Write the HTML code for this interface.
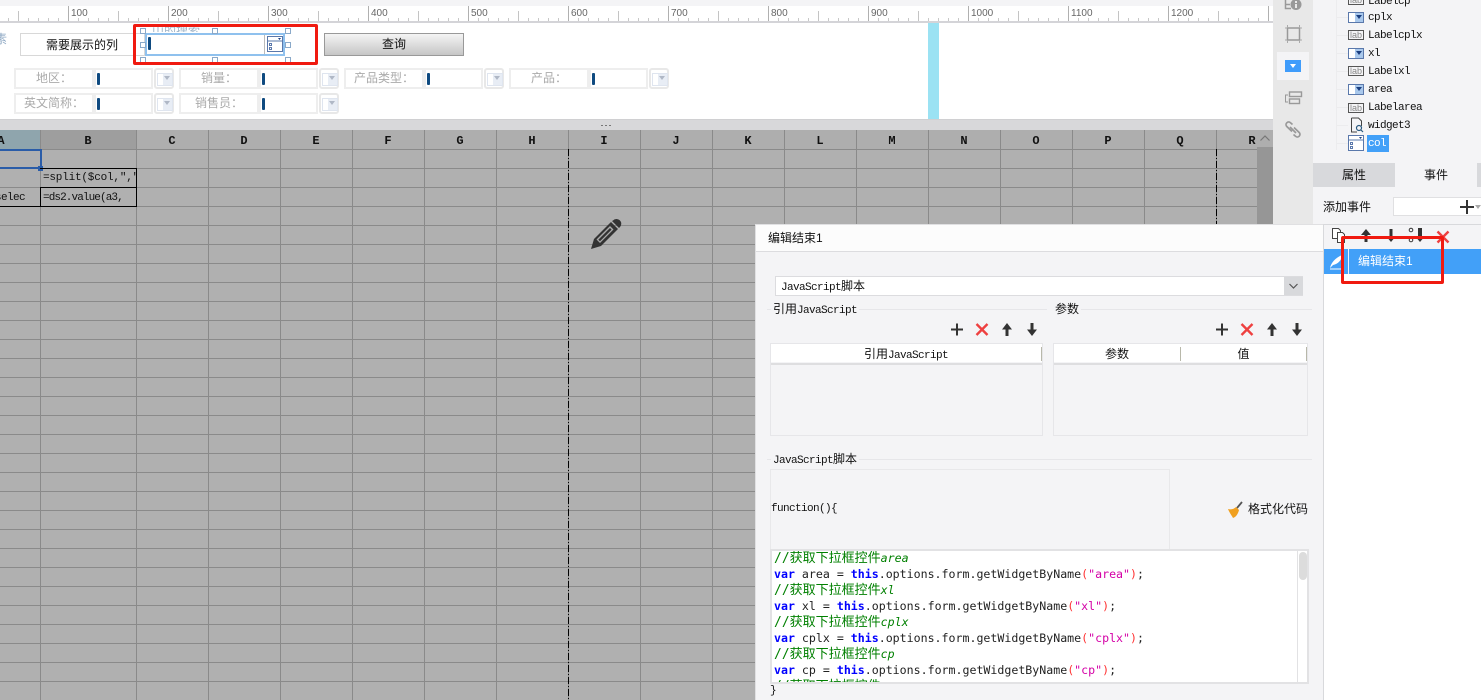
<!DOCTYPE html>
<html lang="zh"><head><meta charset="utf-8"><title>编辑结束1</title>
<style>
html,body{margin:0;padding:0;width:1481px;height:700px;overflow:hidden;background:#f4f4f6}
body{position:relative;font:12px "Liberation Sans","Noto Sans CJK SC",sans-serif;color:#111}
div,span,svg{position:absolute;box-sizing:border-box}
b.m{position:static;font:11px "Liberation Mono",monospace;letter-spacing:-.6px}
.t{white-space:nowrap;line-height:16px}
.r{font:10px/12px "Liberation Sans",sans-serif;color:#666;top:8px}
.c{top:131px;width:72px;text-align:center;font:bold 12px/20px "Liberation Mono",monospace;color:#111}
.lb{border:2px solid #eee;background:#fff;color:#aaa;text-align:center;line-height:17px;height:21px;width:80px}
.ip{border:2px solid #eee;background:#fff;height:21px;width:59px}
.ip:before{content:"";position:absolute;left:1px;top:3px;width:3px;height:12px;background:#0f4a80;border-radius:1px}
.dd{border:2px solid #e8e8e8;border-radius:3px;background:#fff;height:21px;width:20px}
.dd:before{content:"";position:absolute;left:1px;top:3px;width:14px;height:11px;border:1px solid #dfe5ef;background:linear-gradient(90deg,#fff 0 5px,#e8edf5 5px)}
.dd:after{content:"";position:absolute;left:8px;top:6px;border:3px solid transparent;border-top:4px solid #b0b8c6}
.h{width:6px;height:6px;background:#fff;border:1px solid #8aa9c9}
.tl{left:1368px;font:11px/14px "Liberation Mono",monospace;letter-spacing:-.6px;color:#111;white-space:nowrap}
.ic{left:1348px;width:16px;height:11px;border:1px solid #5a78ab;background:#fff}
.ic:before{content:"";position:absolute;left:6px;top:0;width:8px;height:9px;background:#a9c8ec}
.ic:after{content:"";position:absolute;left:7px;top:2px;border:3px solid transparent;border-top:4px solid #1b3f80}
.lab{left:1348px;width:16px;height:10px;border:1px solid #555;background:#f4f4f6;font:9px/8px "Liberation Sans",sans-serif;color:#888;text-align:center}
.tree{left:1336px;width:12px;height:1px;background:#ececee}
.code{left:2px;width:522px;font:11.6px/16px "DejaVu Sans Mono","Noto Sans CJK SC",monospace;white-space:pre;color:#222}
.k{position:static;color:#00f;font-weight:bold}.s{position:static;color:#d400a6}.p{position:static;color:#f33}
.g{color:#008000;font-size:13px}.g em{position:static;font-size:11.6px}
.fl{height:1px;background:#e6e6e9}
.lg{background:#f4f4f6;padding:0 2px;white-space:nowrap;line-height:16px}
.cell{font:11px/16px "Liberation Mono",monospace;white-space:nowrap}
</style></head><body>

<!-- ruler -->
<div style="left:0;top:6px;width:1273px;height:17px;background:#fff;border-bottom:2px solid #d4d4d8"></div>
<div style="left:-2px;top:18px;width:1275px;height:3px;background:repeating-linear-gradient(90deg,#c8c8c8 0 1px,transparent 1px 10px)"></div>
<div style="left:18px;top:11px;width:1255px;height:10px;background:repeating-linear-gradient(90deg,#c4c4c4 0 1px,transparent 1px 50px)"></div>
<div style="left:68px;top:6px;width:1205px;height:15px;background:repeating-linear-gradient(90deg,#b0b0b0 0 1px,transparent 1px 100px)"></div>
<span class="r" style="left:71px">100</span><span class="r" style="left:171px">200</span><span class="r" style="left:271px">300</span><span class="r" style="left:371px">400</span><span class="r" style="left:471px">500</span><span class="r" style="left:571px">600</span><span class="r" style="left:671px">700</span><span class="r" style="left:771px">800</span><span class="r" style="left:871px">900</span><span class="r" style="left:971px">1000</span><span class="r" style="left:1071px">1100</span><span class="r" style="left:1171px">1200</span>

<!-- form area -->
<div style="left:0;top:23px;width:1273px;height:97px;background:#fff;border-bottom:1px solid #d0d0d2"></div>
<div style="left:928px;top:23px;width:11px;height:96px;background:#9be2f3"></div>
<span class="t" style="left:-5px;top:31px;color:#8fa9c4">素</span>
<div class="t" style="left:20px;top:33px;width:125px;height:23px;border:1px solid #d8d8d8;background:#fff;text-align:center;line-height:22px;padding-right:1px">需要展示的列</div>
<span class="t" style="left:152px;top:23px;color:#9fb4c8;height:9px;overflow:hidden">山的搜索</span>
<div style="left:145px;top:33px;width:140px;height:23px;border:2px solid #8fc1ee;background:#fff"></div>
<div style="left:148px;top:37px;width:3px;height:13px;background:#0f4a80;border-radius:1px"></div>
<div style="left:264px;top:35px;width:1px;height:19px;background:#bbb"></div>
<svg style="left:267px;top:36px" width="16" height="16"><rect x=".5" y=".5" width="15" height="15" fill="#fff" stroke="#5a78ab"/><path d="M1 5h14" stroke="#5a78ab"/><path d="M11 2h3l-1.500 2z" fill="#1b3f80"/><rect x="2.500" y="7.500" width="2" height="2" fill="none" stroke="#5a78ab"/><rect x="2.500" y="11.500" width="2" height="2" fill="none" stroke="#5a78ab"/></svg>
<div class="h" style="left:140px;top:28px"></div><div class="h" style="left:212px;top:28px"></div><div class="h" style="left:285px;top:28px"></div>
<div class="h" style="left:140px;top:42px"></div><div class="h" style="left:285px;top:42px"></div>
<div class="h" style="left:140px;top:57px"></div><div class="h" style="left:212px;top:57px"></div><div class="h" style="left:285px;top:57px"></div>
<div class="t" style="left:324px;top:33px;width:140px;height:23px;border:1px solid #999;background:linear-gradient(#f4f4f4,#c6c6c6);text-align:center;line-height:21px">查询</div>

<div class="lb" style="left:14px;top:68px">地区：</div><div class="ip" style="left:94px;top:68px"></div><div class="dd" style="left:154px;top:68px"></div>
<div class="lb" style="left:179px;top:68px">销量：</div><div class="ip" style="left:259px;top:68px"></div><div class="dd" style="left:319px;top:68px"></div>
<div class="lb" style="left:344px;top:68px">产品类型：</div><div class="ip" style="left:424px;top:68px"></div><div class="dd" style="left:484px;top:68px"></div>
<div class="lb" style="left:509px;top:68px">产品：</div><div class="ip" style="left:589px;top:68px"></div><div class="dd" style="left:649px;top:68px"></div>
<div class="lb" style="left:14px;top:93px">英文简称：</div><div class="ip" style="left:94px;top:93px"></div><div class="dd" style="left:154px;top:93px"></div>
<div class="lb" style="left:179px;top:93px">销售员：</div><div class="ip" style="left:259px;top:93px"></div><div class="dd" style="left:319px;top:93px"></div>

<!-- strip -->
<div style="left:0;top:120px;width:1273px;height:10px;background:#d8d8da"></div>
<div style="left:601px;top:125px;width:10px;height:1px;background:repeating-linear-gradient(90deg,#777 0 2px,transparent 2px 4px)"></div>

<!-- grid -->
<div style="left:0;top:130px;width:1257px;height:570px;background:#b0b0b0"></div>
<div style="left:0;top:130px;width:1257px;height:19px;background:#aeaeae"></div>
<div style="left:0;top:130px;width:40px;height:19px;background:#8fa5ad"></div>
<div style="left:41px;top:130px;width:95px;height:19px;background:#9e9e9e"></div>
<div style="left:0;top:149px;width:1257px;height:551px;background:repeating-linear-gradient(180deg,#8a8a8a 0 1px,transparent 1px 19px)"></div>
<div style="left:40px;top:130px;width:1px;height:570px;background:#8a8a8a"></div>
<div style="left:136px;top:130px;width:1121px;height:570px;background:repeating-linear-gradient(90deg,#8a8a8a 0 1px,transparent 1px 72px)"></div>
<span class="c" style="left:-35px">A</span><span class="c" style="left:52px">B</span><span class="c" style="left:136px">C</span><span class="c" style="left:208px">D</span><span class="c" style="left:280px">E</span><span class="c" style="left:352px">F</span><span class="c" style="left:424px">G</span><span class="c" style="left:496px">H</span><span class="c" style="left:568px">I</span><span class="c" style="left:640px">J</span><span class="c" style="left:712px">K</span><span class="c" style="left:784px">L</span><span class="c" style="left:856px">M</span><span class="c" style="left:928px">N</span><span class="c" style="left:1000px">O</span><span class="c" style="left:1072px">P</span><span class="c" style="left:1144px">Q</span><span class="c" style="left:1216px">R</span>
<div style="left:0;top:149px;width:42px;height:20px;border:2px solid #2a5ca8;border-left:0"></div>
<div style="left:38px;top:166px;width:5px;height:5px;background:#2a5ca8"></div>
<div style="left:40px;top:168px;width:97px;height:39px;border:1px solid #000;border-left:0"></div>
<div style="left:40px;top:187px;width:1px;height:20px;background:#000"></div>
<div style="left:40px;top:187px;width:97px;height:1px;background:#000"></div>
<div style="left:0;top:206px;width:40px;height:1px;background:#000"></div>
<span class="cell" style="left:43px;top:170px;letter-spacing:-.2px;width:93px;overflow:hidden">=split($col,","</span>
<span class="cell" style="left:43px;top:190px;letter-spacing:-.9px">=ds2.value(a3,</span>
<span class="cell" style="left:-5px;top:190px;letter-spacing:-.6px">selec</span>
<div style="left:568px;top:149px;width:1px;height:551px;background:repeating-linear-gradient(180deg,#000 0 7px,transparent 7px 9px,#000 9px 10px,transparent 10px 12px)"></div>
<div style="left:1216px;top:149px;width:1px;height:75px;background:repeating-linear-gradient(180deg,#000 0 7px,transparent 7px 9px,#000 9px 10px,transparent 10px 12px)"></div>
<svg style="left:590px;top:218px" width="33" height="32" viewBox="0 0 33 32"><path d="M1 31l3-10L21 4l7 7L11 28z" fill="#333"/><path d="M6.500 21.500L20 8l3.500 3.500L10 25z" fill="#aaa"/><path d="M8.300 21.700L20 10l1.600 1.600L10 23.300z" fill="#333"/><path d="M23 2.500a4 4 0 0 1 7 6.500l-1 1-7-7z" fill="#333"/></svg>

<!-- scrollbar -->
<div style="left:1257px;top:130px;width:16px;height:570px;background:#969696"></div>
<div style="left:1257px;top:130px;width:16px;height:17px;background:#aeaeae"></div>
<svg style="left:1259px;top:134px" width="12" height="8"><path d="M1.500 6.500L6 2l4.500 4.500" fill="none" stroke="#777" stroke-width="1.200"/></svg>

<!-- side icons -->
<div style="left:1273px;top:0;width:40px;height:224px;background:#e8e8e8"></div>
<div style="left:1277px;top:52px;width:32px;height:28px;background:#f4f4f6"></div>
<div style="left:1285px;top:60px;width:16px;height:12px;background:#3f9cfb"></div>
<svg style="left:1290px;top:63px" width="6" height="6"><path d="M0 1h6L3 5z" fill="#fff"/></svg>
<svg style="left:1284px;top:0" width="18" height="11"><path d="M1.500 0v8.500H7M1.500 4.500H6" fill="none" stroke="#999" stroke-width="1.500"/><circle cx="12" cy="4.500" r="5.500" fill="#999"/><path d="M11 1h2v2h-2zM11 4h2v4h-2z" fill="#e8e8e8"/></svg>
<svg style="left:1285px;top:25px" width="17" height="18"><rect x="2.500" y="3" width="12" height="12" fill="none" stroke="#999" stroke-width="1.500"/><path d="M2.500 0v3M14.500 0v3M2.500 15v3M14.500 15v3M0 3h2M15 3h2M0 15h2M15 15h2" stroke="#aaa"/></svg>
<svg style="left:1284px;top:91px" width="19" height="14"><path d="M4 4H1.500v7H4" fill="none" stroke="#999"/><rect x="5.500" y="1" width="12" height="4.500" fill="none" stroke="#999" stroke-width="1.400"/><rect x="5.500" y="8" width="10" height="4.500" fill="none" stroke="#999" stroke-width="1.400"/></svg>
<svg style="left:1285px;top:121px" width="16" height="17" viewBox="0 0 16 17"><path d="M7.500 3.500L5.500 1.800a2.600 2.600 0 0 0-3.700 3.700l5.200 5M8.500 13.500l2 1.700a2.600 2.600 0 0 0 3.700-3.700l-5.200-5" fill="none" stroke="#999" stroke-width="1.700"/><path d="M5 6l6 6" stroke="#999" stroke-width="1.700"/></svg>

<!-- right panel -->
<div style="left:1313px;top:0;width:168px;height:224px;background:#f4f4f6"></div>
<div style="left:1336px;top:0;width:1px;height:150px;background:#ececee"></div>
<div class="tree" style="top:17px"></div><div class="tree" style="top:35px"></div><div class="tree" style="top:53px"></div><div class="tree" style="top:71px"></div><div class="tree" style="top:89px"></div><div class="tree" style="top:107px"></div><div class="tree" style="top:125px"></div><div class="tree" style="top:143px"></div>
<div class="lab" style="top:-5px">lab</div><span class="tl" style="top:-5px">Labelcp</span>
<div class="ic" style="top:12px"></div><span class="tl" style="top:11px">cplx</span>
<div class="lab" style="top:30px">lab</div><span class="tl" style="top:29px">Labelcplx</span>
<div class="ic" style="top:48px"></div><span class="tl" style="top:47px">xl</span>
<div class="lab" style="top:66px">lab</div><span class="tl" style="top:65px">Labelxl</span>
<div class="ic" style="top:84px"></div><span class="tl" style="top:83px">area</span>
<div class="lab" style="top:103px">lab</div><span class="tl" style="top:101px">Labelarea</span>
<svg style="left:1349px;top:117px" width="15" height="16"><path d="M2.500 1h7l3 3v5M2.500 1v14H8" fill="none" stroke="#444"/><circle cx="10" cy="11" r="2.500" fill="none" stroke="#2a5a80" stroke-width="1.200"/><path d="M12 13l2 2" stroke="#2a5a80" stroke-width="1.200"/></svg>
<span class="tl" style="top:119px">widget3</span>
<svg style="left:1348px;top:135px" width="16" height="17"><rect x=".5" y=".5" width="15" height="15" fill="#fff" stroke="#5a78ab"/><path d="M1 5h14" stroke="#5a78ab"/><path d="M11 2h3l-1.500 2z" fill="#1b3f80"/><rect x="2.500" y="7.500" width="2" height="2" fill="none" stroke="#5a78ab"/><rect x="2.500" y="11.500" width="2" height="2" fill="none" stroke="#5a78ab"/></svg>
<div style="left:1367px;top:135px;width:22px;height:17px;background:#42a0f8"></div>
<span class="tl" style="top:137px;color:#fff">col</span>

<div class="t" style="left:1313px;top:163px;width:82px;height:24px;background:#d8d9dc;text-align:center;line-height:24px">属性</div>
<div class="t" style="left:1395px;top:163px;width:82px;height:24px;background:#f4f4f6;text-align:center;line-height:24px">事件</div>
<div style="left:1477px;top:163px;width:4px;height:24px;background:#d8d9dc"></div>
<span class="t" style="left:1323px;top:199px">添加事件</span>
<div style="left:1393px;top:197px;width:88px;height:19px;background:#fff;border:1px solid #e0e0e2;border-right:0"></div>
<svg style="left:1460px;top:200px" width="14" height="14"><path d="M7 0v14M0 7h14" stroke="#333" stroke-width="2"/></svg>
<svg style="left:1475px;top:205px" width="6" height="4"><path d="M0 0h6L3 4z" fill="#aaa"/></svg>
<div style="left:1323px;top:224px;width:158px;height:476px;background:#fff;border-top:1px solid #d8d9dc"></div>
<div style="left:1323px;top:225px;width:158px;height:24px;background:#f4f4f6"></div>
<div style="left:1323px;top:224px;width:1px;height:476px;background:#d8d9dc"></div>
<div style="left:1324px;top:249px;width:157px;height:25px;background:#42a0f8"></div>
<div style="left:1348px;top:249px;width:1px;height:25px;background:#e8f2fd"></div>
<svg style="left:1329px;top:254px" width="16" height="16"><path d="M1 14C2 9 6 4 13 1c0 5-4 9-9 10z" fill="#fff"/><path d="M1 15h14" stroke="#fff"/></svg>
<span class="t" style="left:1358px;top:253px;color:#fff">编辑结束1</span>
<svg style="left:1331px;top:227px" width="16" height="17"><path d="M1.500 1.500h6l2 2v8h-8z" fill="#fff" stroke="#444"/><path d="M6.500 5.500h5l2 2v8h-7z" fill="#fff" stroke="#444"/></svg>
<svg style="left:1359px;top:228px" width="14" height="15"><path d="M7 1l5 6H8.500v7h-3V7H2z" fill="#333"/></svg>
<svg style="left:1384px;top:228px" width="14" height="15"><path d="M7 14L2 8h3.500V1h3v7H12z" fill="#333"/></svg>
<svg style="left:1408px;top:227px" width="18" height="17"><circle cx="3" cy="3" r="1.800" fill="none" stroke="#333"/><circle cx="3" cy="13" r="1.800" fill="none" stroke="#333"/><path d="M12 15l-5-6h3V1h4v8h3z" fill="#333"/></svg>
<svg style="left:1436px;top:230px" width="14" height="14"><path d="M1.500 1.500l11 11M12.500 1.500l-11 11" stroke="#ee4040" stroke-width="2.400"/></svg>

<!-- dialog -->
<div style="left:755px;top:224px;width:568px;height:476px;background:#f4f4f6;border-left:1px solid #e0e0e2;border-top:1px solid #e0e0e2"></div>
<div style="left:756px;top:225px;width:567px;height:27px;background:#fcfcfc;border-bottom:1px solid #dcdcdf"></div>
<span class="t" style="left:768px;top:230px">编辑结束1</span>
<div style="left:775px;top:276px;width:528px;height:20px;background:#fff;border:1px solid #dcdcdf"></div>
<div style="left:1284px;top:277px;width:19px;height:18px;background:#d8d9dc"></div>
<svg style="left:1288px;top:283px" width="11" height="7"><path d="M1.500 1l4 4 4-4" fill="none" stroke="#555" stroke-width="1.200"/></svg>
<span class="t" style="left:781px;top:278px"><b class="m" style="font-weight:normal">JavaScript</b>脚本</span>

<div class="fl" style="left:767px;top:309px;width:280px"></div>
<span class="t lg" style="left:771px;top:301px">引用<b class="m" style="font-weight:normal">JavaScript</b></span>
<div class="fl" style="left:1055px;top:309px;width:257px"></div>
<span class="t lg" style="left:1053px;top:301px">参数</span>

<svg style="left:950px;top:322px" width="90" height="15"><path d="M7 1.500v12M1 7.500h12" stroke="#333" stroke-width="2"/><path d="M26.500 2l11 11M37.500 2l-11 11" stroke="#ee4040" stroke-width="2.400"/><path d="M57 14V6" stroke="#333" stroke-width="3"/><path d="M52 7.500L57 1l5 6.500z" fill="#333"/><path d="M82 1v8" stroke="#333" stroke-width="3"/><path d="M77 7.500L82 14l5-6.500z" fill="#333"/></svg>
<svg style="left:1215px;top:322px" width="90" height="15"><path d="M7 1.500v12M1 7.500h12" stroke="#333" stroke-width="2"/><path d="M26.500 2l11 11M37.500 2l-11 11" stroke="#ee4040" stroke-width="2.400"/><path d="M57 14V6" stroke="#333" stroke-width="3"/><path d="M52 7.500L57 1l5 6.500z" fill="#333"/><path d="M82 1v8" stroke="#333" stroke-width="3"/><path d="M77 7.500L82 14l5-6.500z" fill="#333"/></svg>

<div style="left:770px;top:343px;width:273px;height:93px;border:1px solid #e6e6e9"></div>
<div style="left:771px;top:344px;width:271px;height:18px;background:#fff"></div>
<div style="left:771px;top:363px;width:271px;height:2px;background:#dedee0"></div>
<div style="left:1041px;top:347px;width:1px;height:14px;background:#b8b8aa"></div>
<div class="t" style="left:771px;top:346px;width:270px;text-align:center">引用<b class="m" style="font-weight:normal">JavaScript</b></div>

<div style="left:1053px;top:343px;width:255px;height:93px;border:1px solid #e6e6e9"></div>
<div style="left:1054px;top:344px;width:253px;height:18px;background:#fff"></div>
<div style="left:1054px;top:363px;width:253px;height:2px;background:#dedee0"></div>
<div style="left:1180px;top:347px;width:1px;height:14px;background:#b8b8aa"></div>
<div style="left:1306px;top:347px;width:1px;height:14px;background:#b8b8aa"></div>
<div class="t" style="left:1054px;top:346px;width:126px;text-align:center">参数</div>
<div class="t" style="left:1181px;top:346px;width:125px;text-align:center">值</div>

<div class="fl" style="left:767px;top:459px;width:545px"></div>
<span class="t lg" style="left:771px;top:451px"><b class="m" style="font-weight:normal">JavaScript</b>脚本</span>
<div style="left:770px;top:469px;width:400px;height:81px;border:1px solid #e8e8ea"></div>
<span class="cell" style="left:771px;top:501px;letter-spacing:-.6px">function(){</span>
<svg style="left:1227px;top:501px" width="17" height="17"><path d="M10 7l5-6" stroke="#555" stroke-width="1.800"/><path d="M1 8c3 1 6 0 8-2l3 3c-1 4-3 7-6 8-1-2-4-6-5-9z" fill="#f0a020"/></svg>
<span class="t" style="left:1248px;top:501px">格式化代码</span>

<div style="left:770px;top:549px;width:539px;height:135px;background:#fff;border:2px solid #e2e2e4;overflow:hidden">
<div class="code g" style="top:-1px">//获取下拉框控件<em>area</em></div>
<div class="code" style="top:15px"><span class="k">var</span> area = <span class="k">this</span>.options.form.getWidgetByName<span class="p">(</span><span class="s">"area"</span><span class="p">)</span>;</div>
<div class="code g" style="top:31px">//获取下拉框控件<em>xl</em></div>
<div class="code" style="top:47px"><span class="k">var</span> xl = <span class="k">this</span>.options.form.getWidgetByName<span class="p">(</span><span class="s">"xl"</span><span class="p">)</span>;</div>
<div class="code g" style="top:63px">//获取下拉框控件<em>cplx</em></div>
<div class="code" style="top:79px"><span class="k">var</span> cplx = <span class="k">this</span>.options.form.getWidgetByName<span class="p">(</span><span class="s">"cplx"</span><span class="p">)</span>;</div>
<div class="code g" style="top:95px">//获取下拉框控件<em>cp</em></div>
<div class="code" style="top:111px"><span class="k">var</span> cp = <span class="k">this</span>.options.form.getWidgetByName<span class="p">(</span><span class="s">"cp"</span><span class="p">)</span>;</div>
<div class="code g" style="top:127px">//获取下拉框控件<em>yw</em></div>
<div style="left:525px;top:0;width:12px;height:131px;background:#fff;border-left:1px solid #e2e2e4"></div>
<div style="left:527px;top:1px;width:8px;height:28px;background:#dcdcdc;border-radius:4px"></div>
</div>
<span class="cell" style="left:770px;top:683px">}</span>

<!-- red annotations -->
<div style="left:133px;top:24px;width:185px;height:41px;border:3px solid #f01a10;border-radius:2px"></div>
<div style="left:1341px;top:236px;width:103px;height:48px;border:3px solid #f01a10;border-radius:2px"></div>
</body></html>
